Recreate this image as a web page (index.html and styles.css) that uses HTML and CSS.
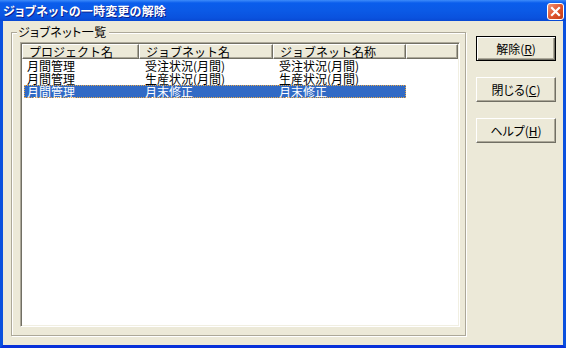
FILE: index.html
```html
<!DOCTYPE html>
<html lang="ja">
<head>
<meta charset="utf-8">
<title>ジョブネットの一時変更の解除</title>
<link rel="stylesheet" href="styles.css">
</head>
<body>
<div class="window">
  <div class="titlebar">
    <span class="title">ジョブネットの一時変更の解除</span>
    <span class="close" aria-label="閉じる">
      <svg width="17" height="17" viewBox="0 0 17 17">
        <defs>
          <linearGradient id="cg" x1="0" y1="0" x2="1" y2="1">
            <stop offset="0" stop-color="#F39A7E"/>
            <stop offset="0.5" stop-color="#E0552F"/>
            <stop offset="1" stop-color="#C23A12"/>
          </linearGradient>
        </defs>
        <rect x="0.5" y="0.5" width="16" height="16" rx="2.5" fill="url(#cg)" stroke="#FFFFFF"/>
        <path d="M5 5 L12 12 M12 5 L5 12" stroke="#FFFFFF" stroke-width="2.2" stroke-linecap="square"/>
      </svg>
    </span>
  </div>
  <div class="client">
    <div class="group">
      <span class="legend">ジョブネット一覧</span>
      <div class="listview">
        <div class="lv-header">
          <div class="hcell c1">プロジェクト名</div>
          <div class="hcell c2">ジョブネット名</div>
          <div class="hcell c3">ジョブネット名称</div>
          <div class="hcell c4"></div>
        </div>
        <div class="lv-body">
          <div class="row">
            <div class="cell c1">月間管理</div>
            <div class="cell c2">受注状況(月間)</div>
            <div class="cell c3">受注状況(月間)</div>
          </div>
          <div class="row">
            <div class="cell c1">月間管理</div>
            <div class="cell c2">生産状況(月間)</div>
            <div class="cell c3">生産状況(月間)</div>
          </div>
          <div class="row selected">
            <div class="cell c1">月間管理</div>
            <div class="cell c2">月末修正</div>
            <div class="cell c3">月末修正</div>
          </div>
        </div>
      </div>
    </div>
    <div class="buttons">
      <button class="btn default">解除(<u>R</u>)</button>
      <button class="btn">閉じる(<u>C</u>)</button>
      <button class="btn">ヘルプ(<u>H</u>)</button>
    </div>
  </div>
</div>
</body>
</html>
```

FILE: styles.css
```css
* { box-sizing: border-box; }
html, body { margin: 0; padding: 0; }
body {
  width: 566px;
  height: 348px;
  overflow: hidden;
  font-family: "Noto Sans CJK JP", "Liberation Sans", sans-serif;
  font-size: 12px;
  color: #000;
  background: #ECE9D8;
}
.window {
  width: 566px;
  height: 348px;
  display: flex;
  flex-direction: column;
  background: #0B55E4;
  border-left: 3px solid #0A50DE;
  border-right: 3px solid #0A50DE;
  border-bottom: 3px solid #0831D9;
  box-shadow: inset 1px 0 0 #0831D9, inset -1px 0 0 #001EA0, inset 0 -1px 0 #001090;
}
.titlebar {
  height: 21px;
  margin: 0 -3px;
  padding: 0 2px 0 3px;
  display: flex;
  align-items: center;
  justify-content: space-between;
  background: linear-gradient(#3D8BFA 0, #0A5DEC 3px, #0B5AE6 50%, #0A52DE 85%, #0848D2 100%);
}
.title {
  color: #fff;
  font-weight: bold;
  font-size: 12px;
  line-height: 14px;
  font-feature-settings: "palt";
  letter-spacing: 0.2px;
  text-shadow: 1px 1px 0 #0A1E8C;
}
.close {
  display: flex;
  width: 17px;
  height: 17px;
  margin-top: 1px;
}
.client {
  flex: 1;
  display: flex;
  align-items: flex-start;
  background: #ECE9D8;
  padding: 11px 0 0 8px;
}
.group {
  position: relative;
  width: 455px;
  height: 304px;
  border: 1px solid #ACA899;
  box-shadow: 1px 1px 0 #fff, inset 1px 1px 0 #fff;
  padding: 9px 5px 8px 8px;
}
.legend {
  position: absolute;
  left: 5px;
  top: -8px;
  padding: 0 2px 0 1px;
  line-height: 14px;
  background: #ECE9D8;
  font-feature-settings: "palt";
  letter-spacing: 0.4px;
}
.listview {
  width: 440px;
  height: 285px;
  background: #fff;
  border-top: 1px solid #ACA899;
  border-left: 1px solid #ACA899;
  border-right: 1px solid #fff;
  border-bottom: 1px solid #fff;
  box-shadow: inset 1px 1px 0 #716F64, inset -1px -1px 0 #F1EFE2;
  padding: 1px;
  display: flex;
  flex-direction: column;
}
.lv-header {
  display: flex;
  height: 15px;
}
.hcell {
  height: 15px;
  background: #ECE9D8;
  border-top: 1px solid #fff;
  border-left: 1px solid #fff;
  border-right: 1px solid #716F64;
  border-bottom: 1px solid #716F64;
  box-shadow: inset -1px -1px 0 #ACA899;
  line-height: 13px;
  padding-left: 6px;
  white-space: nowrap;
}
.c1 { width: 117px; }
.c2 { width: 134px; }
.c3 { width: 133px; }
.hcell.c4 { flex: 1; }
.lv-body {
  display: flex;
  flex-direction: column;
}
.row {
  display: flex;
  height: 13px;
  margin-left: 2px;
  width: 382px;
  white-space: nowrap;
}
.row .cell {
  padding-left: 6px;
  font-size: 12px;
  line-height: 13px;
}
.row .c1 { width: 115px; padding-left: 3px; }
.row.selected {
  background: #316AC5;
  color: #fff;
  outline: 1px dotted #E8A848;
  outline-offset: -1px;
}
.buttons {
  display: flex;
  flex-direction: column;
  gap: 16px;
  margin-left: 10px;
  margin-top: 4px;
}
.btn {
  width: 80px;
  height: 25px;
  padding: 0;
  margin: 0;
  font-family: "Noto Sans CJK JP", "Liberation Sans", sans-serif;
  font-size: 12px;
  line-height: 14px;
  color: #000;
  background: #ECE9D8;
  border-top: 1px solid #fff;
  border-left: 1px solid #fff;
  border-right: 1px solid #716F64;
  border-bottom: 1px solid #716F64;
  box-shadow: inset -1px -1px 0 #ACA899;
  border-radius: 0;
  font-feature-settings: "palt";
}
.btn u { text-underline-offset: 1px; }
.btn.default {
  border: 1px solid #000;
  box-shadow: inset 1px 1px 0 #fff, inset -1px -1px 0 #716F64, inset -2px -2px 0 #ACA899;
}
```
